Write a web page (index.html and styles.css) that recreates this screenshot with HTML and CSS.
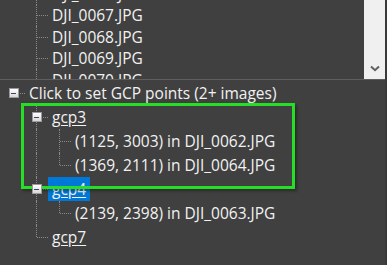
FILE: index.html
```html
<!DOCTYPE html>
<html>
<head>
<meta charset="utf-8">
<link rel="stylesheet" href="styles.css">
</head>
<body>
<div class="frame">
  <div class="top">
    <div class="list">
      <div class="files">
        <div class="row"><span class="cell"></span><span class="cell tee"></span><span class="label">DJI_0066.JPG</span></div>
        <div class="row"><span class="cell"></span><span class="cell tee"></span><span class="label">DJI_0067.JPG</span></div>
        <div class="row"><span class="cell"></span><span class="cell tee"></span><span class="label">DJI_0068.JPG</span></div>
        <div class="row"><span class="cell"></span><span class="cell tee"></span><span class="label">DJI_0069.JPG</span></div>
        <div class="row"><span class="cell"></span><span class="cell tee"></span><span class="label">DJI_0070.JPG</span></div>
      </div>
    </div>
    <div class="scrollbar">
      <svg class="chev" width="10" height="7" viewBox="0 0 10 7"><path d="M1 1.5 L5 5.2 L9 1.5" fill="none" stroke="#606060" stroke-width="2"/></svg>
    </div>
  </div>
  <div class="divider"></div>
  <div class="tree">
    <div class="row"><span class="cell right"><span class="box"></span></span><span class="label">Click to set GCP points (2+ images)</span></div>
    <div class="row"><span class="cell"></span><span class="cell tee"><span class="box"></span></span><span class="label link">gcp3</span></div>
    <div class="row"><span class="cell"></span><span class="cell pipe"></span><span class="cell tee"></span><span class="label">(1125, 3003) in DJI_0062.JPG</span></div>
    <div class="row"><span class="cell"></span><span class="cell pipe"></span><span class="cell elbow"></span><span class="label">(1369, 2111) in DJI_0064.JPG</span></div>
    <div class="row"><span class="cell"></span><span class="cell tee"><span class="box"></span></span><span class="label link selected">gcp4</span></div>
    <div class="row"><span class="cell"></span><span class="cell pipe"></span><span class="cell elbow"></span><span class="label">(2139, 2398) in DJI_0063.JPG</span></div>
    <div class="row"><span class="cell"></span><span class="cell elbow"></span><span class="label link">gcp7</span></div>
    <div class="highlight"></div>
  </div>
</div>
</body>
</html>
```

FILE: styles.css
```css
html, body {
  margin: 0;
  padding: 0;
  background: #3a3a3a;
}
.frame {
  width: 385px;
  height: 265px;
  background: #404040;
  font-family: "Open Sans", "Noto Sans", sans-serif;
  font-size: 15.5px;
  color: #f2f2f2;
  overflow: hidden;
}
.top {
  height: 79px;
  display: flex;
  overflow: hidden;
}
.list {
  flex: 1;
  overflow: hidden;
}
.files {
  margin-top: -17px;
  padding-left: 2px;
}
.scrollbar {
  width: 21px;
  background: #f0f0f0;
  display: flex;
  flex-direction: column;
  justify-content: flex-end;
  align-items: center;
  padding-bottom: 7px;
  box-sizing: border-box;
}
.divider {
  height: 1px;
  background: #5e5e5e;
}
.tree {
  position: relative;
  padding-top: 1px;
  padding-left: 2px;
}
.row {
  display: flex;
  align-items: center;
  height: 24px;
}
.files .row {
  height: 21.5px;
}
.cell {
  position: relative;
  width: 23px;
  height: 100%;
  flex: none;
  display: flex;
  align-items: center;
  justify-content: center;
}
.cell.pipe::before,
.cell.tee::before,
.cell.elbow::before {
  content: "";
  position: absolute;
  left: 11px;
  top: 0;
  bottom: 0;
  border-left: 1px dotted #8a8a8a;
}
.cell.elbow::before {
  bottom: 50%;
}
.cell.tee::after,
.cell.elbow::after,
.cell.right::after {
  content: "";
  position: absolute;
  left: 12px;
  right: 0;
  top: 50%;
  border-top: 1px dotted #8a8a8a;
}
.box {
  position: relative;
  z-index: 1;
  width: 8px;
  height: 8px;
  border: 1px solid #9a9a9a;
  background: linear-gradient(#ffffff, #d8d8d8);
  display: flex;
  align-items: center;
  justify-content: center;
}
.box::before {
  content: "";
  width: 5px;
  height: 1px;
  background: #3a4868;
}
.label {
  padding: 0 4px;
  height: 100%;
  display: flex;
  align-items: center;
  white-space: nowrap;
}
.link {
  text-decoration: underline;
  text-underline-offset: 2px;
}
.selected {
  background: #0078d7;
}
.highlight {
  position: absolute;
  left: 21px;
  top: 23px;
  width: 268px;
  height: 80px;
  border: 3px solid #27de27;
  box-shadow: 2px 2px 3px rgba(0, 0, 0, 0.35);
}
```
